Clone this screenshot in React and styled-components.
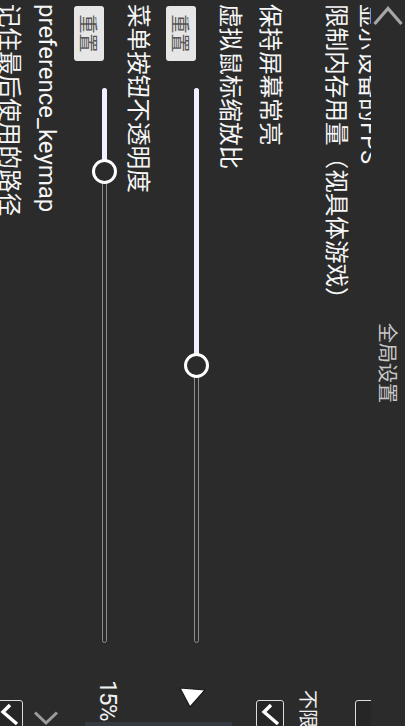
import React from "react";
import styled, { createGlobalStyle } from "styled-components";

const GlobalStyle = createGlobalStyle`
  html, body { margin: 0; padding: 0; background: #2b2b2b; overflow: hidden; }
  #root { width: 405px; height: 726px; overflow: hidden; }
  * { box-sizing: border-box; }
`;

const Device = styled.div`
  width: 405px;
  height: 726px;
  overflow: hidden;
  background: #2b2b2b;
`;

const Landscape = styled.div`
  position: relative;
  width: 726px;
  height: 405px;
  transform-origin: 0 0;
  transform: translateX(405px) rotate(90deg);
  display: flex;
  flex-direction: column;
  overflow: hidden;
  background: #2b2b2b;
  font-family: Roboto, "Noto Sans CJK SC", sans-serif;
  color: #f4f4f4;
`;

const Header = styled.header`
  position: relative;
  z-index: 1;
  flex: none;
  height: 34px;
  display: grid;
  grid-template-columns: 1fr auto 1fr;
  align-items: center;
  background: #2b2b2b;
`;

const BackButton = styled.button`
  justify-self: start;
  margin-left: 6px;
  width: 20px;
  height: 30px;
  padding: 0;
  border: 0;
  background: none;
  display: flex;
`;

const Title = styled.h1`
  margin: 0;
  font-family: "Noto Sans CJK SC", sans-serif;
  font-weight: 400;
  font-size: 20px;
  line-height: 20px;
  color: #c8c8c8;
`;

const Viewport = styled.div`
  flex: 1;
  overflow: hidden;
`;

const List = styled.div`
  width: 760px;
  margin-top: -20px;
  display: flex;
  flex-direction: column;
`;

const Row = styled.div`
  display: flex;
  justify-content: space-between;
  align-items: ${(p) => (p.$top ? "flex-start" : "center")};
  height: ${(p) => p.$h}px;
  padding: ${(p) => p.$pad || "0 0 0 4px"};
  flex: none;
`;

const PrefTitle = styled.div`
  font-size: 23.6px;
  line-height: 23px;
  white-space: nowrap;
  color: #f6f6f6;
`;

const WidgetSlot = styled.div`
  flex: none;
  width: 70px;
  display: flex;
  align-items: center;
`;

const ValueText = styled.div`
  margin-top: 28px;
  font-family: "Noto Sans CJK SC", sans-serif;
  font-size: 19px;
  line-height: 19px;
  white-space: nowrap;
  color: #f0f0f0;
`;

const CheckBox = styled.div`
  margin-left: 10px;
  width: 28px;
  height: 28px;
  border: 1.5px solid #dcdcdc;
  border-radius: 3px;
  background: #262626;
  display: flex;
`;

const ChevronWrap = styled.div`
  margin-left: 20px;
  display: flex;
`;

const SliderPref = styled.div`
  flex: none;
  height: 92px;
  padding: 7px 0 0 4px;
  display: flex;
  flex-direction: column;
`;

const SliderLine = styled.div`
  margin-top: 9px;
  padding-left: 2px;
  display: flex;
  align-items: flex-start;
`;

const ResetButton = styled.button`
  flex: none;
  margin-top: 12.5px;
  width: 55px;
  height: 30px;
  padding: 0;
  border: 0;
  border-radius: 3px;
  background: #e6e6e6;
  color: #555;
  font-family: "Noto Sans CJK SC", sans-serif;
  font-size: 19px;
  line-height: 30px;
`;

const SliderBox = styled.div`
  flex: none;
  margin-left: 14.5px;
  width: 580px;
  height: 25px;
  padding: 0 12.5px;
`;

const Rail = styled.div`
  position: relative;
  width: 100%;
  height: 25px;
  display: flex;
  align-items: center;
`;

const Track = styled.div`
  position: relative;
  width: 100%;
  height: 5px;
  border: 1px solid #8e8e8e;
  border-radius: 3px;
  background: #2b2b2b;
`;

const Fill = styled.div`
  position: absolute;
  left: -1px;
  top: -1px;
  bottom: -1px;
  border-radius: 3px;
  background: #f2f0ff;
`;

const Thumb = styled.div`
  position: absolute;
  top: 0;
  width: 25px;
  height: 25px;
  margin-left: -12.5px;
  border: 3px solid #ffffff;
  border-radius: 50%;
  background: #2b2b2b;
`;

const SliderValue = styled.div`
  margin-left: 24.5px;
  margin-top: -3px;
  font-family: Roboto, sans-serif;
  font-size: 24px;
  line-height: 25px;
  letter-spacing: -1.5px;
  color: #f0f0f0;
  white-space: nowrap;
`;

const KeymapTitle = styled(PrefTitle)`
  font-size: 24px;
`;

const Cursor = styled.svg`
  position: absolute;
  left: 686px;
  top: 198px;
`;

const EdgeStrip = styled.div`
  position: absolute;
  left: 722px;
  top: 173px;
  width: 4px;
  height: 147px;
  background: #353a40;
`;

function Check({ checked }) {
  return (
    <CheckBox>
      {checked && (
        <svg width="26" height="26" viewBox="0 0 26 26">
          <polyline points="4,12 11,19 23,5" fill="none" stroke="#ffffff" strokeWidth="3.4" />
        </svg>
      )}
    </CheckBox>
  );
}

function Slider({ pct, value }) {
  return (
    <SliderLine>
      <ResetButton>重置</ResetButton>
      <SliderBox>
        <Rail>
          <Track>
            <Fill style={{ width: `calc(${pct}% + 2px)` }} />
          </Track>
          <Thumb style={{ left: `${pct}%` }} />
        </Rail>
      </SliderBox>
      {value && <SliderValue>{value}</SliderValue>}
    </SliderLine>
  );
}

export default function App() {
  return (
    <Device>
      <GlobalStyle />
      <Landscape>
        <Header>
          <BackButton aria-label="返回">
            <svg width="20" height="30" viewBox="0 0 20 30">
              <polyline points="18,1.5 2.5,15 18,28.5" fill="none" stroke="#a6a6a6" strokeWidth="3.2" />
            </svg>
          </BackButton>
          <Title>全局设置</Title>
          <span />
        </Header>
        <Viewport>
          <List>
            <Row $h={44}>
              <PrefTitle>显示设备的FPS</PrefTitle>
              <WidgetSlot><Check /></WidgetSlot>
            </Row>
            <Row $h={55} $top>
              <PrefTitle>限制内存用量（视具体游戏）</PrefTitle>
              <WidgetSlot><ValueText>不限制</ValueText></WidgetSlot>
            </Row>
            <Row $h={44}>
              <PrefTitle>保持屏幕常亮</PrefTitle>
              <WidgetSlot><Check checked /></WidgetSlot>
            </Row>
            <SliderPref>
              <PrefTitle>虚拟鼠标缩放比</PrefTitle>
              <Slider pct={50} />
            </SliderPref>
            <SliderPref>
              <PrefTitle>菜单按钮不透明度</PrefTitle>
              <Slider pct={15} value="15%" />
            </SliderPref>
            <Row $h={33} $pad="2px 0 0 4px">
              <KeymapTitle>preference_keymap</KeymapTitle>
              <WidgetSlot>
                <ChevronWrap>
                  <svg width="16" height="26" viewBox="0 0 16 26">
                    <polyline points="2.5,2 13,13 2.5,24" fill="none" stroke="#9c9c9c" strokeWidth="3" />
                  </svg>
                </ChevronWrap>
              </WidgetSlot>
            </Row>
            <Row $h={44}>
              <PrefTitle>记住最后使用的路径</PrefTitle>
              <WidgetSlot><Check checked /></WidgetSlot>
            </Row>
          </List>
        </Viewport>
        <EdgeStrip />
        <Cursor width="24" height="30" viewBox="0 0 24 30">
          <polygon points="4,2 2,27 21,17" fill="#ffffff" stroke="#1a1a1a" strokeWidth="1.2" strokeLinejoin="round" />
        </Cursor>
      </Landscape>
    </Device>
  );
}
